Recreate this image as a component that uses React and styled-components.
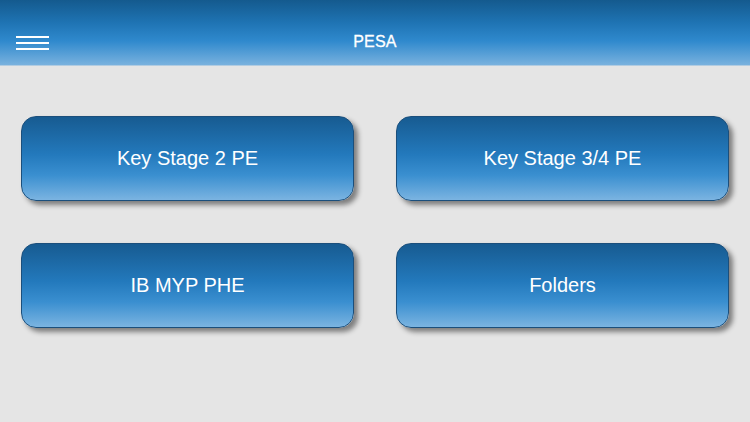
import styled, { createGlobalStyle } from "styled-components";

const GlobalStyle = createGlobalStyle`
  html, body {
    margin: 0;
    padding: 0;
    background: #e5e5e5;
    font-family: "Liberation Sans", Arial, sans-serif;
  }
`;

const Page = styled.div`
  width: 750px;
  height: 422px;
  background: #e5e5e5;
  overflow: hidden;
`;

const TopBar = styled.header`
  position: relative;
  height: 66px;
  display: flex;
  align-items: flex-end;
  justify-content: center;
  padding-bottom: 15px;
  box-sizing: border-box;
  background: linear-gradient(to bottom, #145a8e 0%, #1f74b4 35%, #2f89cd 62%, #78b1de 98%, #d6dde3 100%);
`;

const MenuButton = styled.button`
  position: absolute;
  left: 16px;
  top: 36px;
  width: 33px;
  height: 14px;
  padding: 0;
  border: 0;
  background: none;
  display: flex;
  flex-direction: column;
  justify-content: space-between;
  cursor: pointer;
`;

const MenuLine = styled.span`
  display: block;
  height: 2px;
  background: #ffffff;
`;

const Title = styled.h1`
  margin: 0;
  color: #ffffff;
  font-size: 16px;
  font-weight: 400;
  letter-spacing: 0.2px;
  -webkit-text-stroke: 0.3px #ffffff;
`;

const Grid = styled.main`
  display: grid;
  grid-template-columns: 333px 333px;
  grid-auto-rows: 85px;
  column-gap: 42px;
  row-gap: 42px;
  padding: 50px 21px 0 21px;
`;

const Tile = styled.button`
  border: 1px solid #1b4f7c;
  border-radius: 15px;
  background: linear-gradient(to bottom, #175b91 0%, #2379bc 45%, #3a8fd0 70%, #7bb4e1 100%);
  box-shadow: 4px 4px 5px rgba(0, 0, 0, 0.45);
  color: #ffffff;
  font-family: "Liberation Sans", Arial, sans-serif;
  font-size: 20px;
  cursor: pointer;
  display: flex;
  align-items: center;
  justify-content: center;
  padding: 0;
`;

const items = ["Key Stage 2 PE", "Key Stage 3/4 PE", "IB MYP PHE", "Folders"];

export default function App() {
  return (
    <Page>
      <GlobalStyle />
      <TopBar>
        <MenuButton aria-label="menu">
          <MenuLine />
          <MenuLine />
          <MenuLine />
        </MenuButton>
        <Title>PESA</Title>
      </TopBar>
      <Grid>
        {items.map((label) => (
          <Tile key={label}>{label}</Tile>
        ))}
      </Grid>
    </Page>
  );
}
